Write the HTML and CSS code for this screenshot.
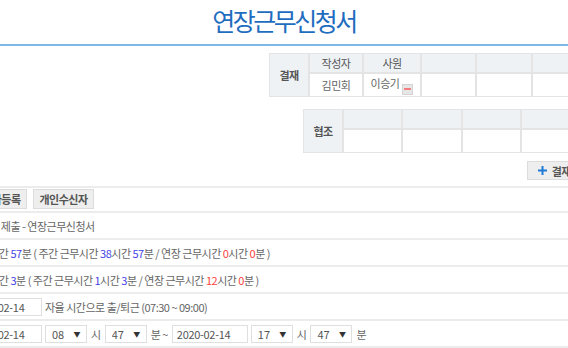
FILE: index.html
```html
<!DOCTYPE html>
<html>
<head>
  <meta charset="utf-8" />
  <title>연장근무신청서</title>
  <link rel="stylesheet" href="styles.css">
</head>
<body>
  <div class="page">
    <h1 class="doc-title">연장근무신청서</h1>

    <!-- approval lines -->
    <div class="approval">
      <table class="sign sign-main">
        <tr class="sign-head">
          <th class="sign-label" rowspan="2">결재</th>
          <td class="w54">작성자</td>
          <td class="w58">사원</td>
          <td class="w55"></td>
          <td class="w56"></td>
          <td class="w56"></td>
        </tr>
        <tr class="sign-body">
          <td>김민회</td>
          <td>이승기 <span class="remove" title="삭제"></span></td>
          <td></td>
          <td></td>
          <td></td>
        </tr>
      </table>

      <table class="sign sign-coop">
        <tr class="sign-head">
          <th class="sign-label" rowspan="2">협조</th>
          <td class="w59"></td>
          <td class="w60"></td>
          <td class="w59"></td>
          <td class="w67"></td>
        </tr>
        <tr class="sign-body">
          <td></td>
          <td></td>
          <td></td>
          <td></td>
        </tr>
      </table>

      <div class="sign-actions">
        <button class="btn btn-add">
          <svg width="9" height="9" viewBox="0 0 9 9"><path d="M4.5 0v9M0 4.5h9" stroke="#1f7bd6" stroke-width="2"/></svg>
          결재
        </button>
      </div>
    </div>

    <!-- form -->
    <div class="form">
      <div class="toolbar">
        <button class="btn">수신자등록</button>
        <button class="btn">개인수신자</button>
      </div>
      <table class="fields">
        <tr>
          <th>제목</th>
          <td>김민회 제출 - 연장근무신청서</td>
        </tr>
        <tr>
          <th>근무시간</th>
          <td class="sum"><b class="n">38</b>시간 <b class="n">57</b>분 ( 주간 근무시간 <b class="n">38</b>시간 <b class="n">57</b>분 / 연장 근무시간 <b class="r">0</b>시간 <b class="r">0</b>분 )</td>
        </tr>
        <tr>
          <th>신청시간</th>
          <td class="sum"><b class="n">13</b>시간 <b class="n">3</b>분 ( 주간 근무시간 <b class="n">1</b>시간 <b class="n">3</b>분 / 연장 근무시간 <b class="r">12</b>시간 <b class="r">0</b>분 )</td>
        </tr>
        <tr>
          <th>근무일</th>
          <td>
            <div class="inline">
              <input class="date" type="text" value="2020-02-14">
              <span>자율 시간으로 출/퇴근 (07:30 ~ 09:00)</span>
            </div>
          </td>
        </tr>
        <tr>
          <th>연장시간</th>
          <td>
            <div class="inline">
              <input class="date" type="text" value="2020-02-14">
              <span class="sel"><select><option>08</option></select></span>
              <span class="unit">시</span>
              <span class="sel"><select><option>47</option></select></span>
              <span class="unit">분 ~</span>
              <input class="date" type="text" value="2020-02-14">
              <span class="sel"><select><option>17</option></select></span>
              <span class="unit">시</span>
              <span class="sel"><select><option>47</option></select></span>
              <span class="unit">분</span>
            </div>
          </td>
        </tr>
        <tr>
          <th>비고</th>
          <td>· 연장근무 시간은 사전에 승인을 받은 후 근무하시기 바랍니다.</td>
        </tr>
      </table>
    </div>
  </div>
</body>
</html>
```

FILE: styles.css
```css
html, body {
  margin: 0;
  padding: 0;
  overflow: hidden;
}
body {
  font-family: "Noto Sans CJK KR", "Liberation Sans", sans-serif;
  font-size: 11px;
  letter-spacing: -0.5px;
  color: #666;
  background: #fff;
}
/* the page is wider than the window and scrolled */
.page {
  width: 820px;
  margin-left: -126px;
}
.doc-title {
  margin: 0;
  height: 40px;
  line-height: 40px;
  padding-bottom: 4px;
  border-bottom: 2px solid #7fb9e8;
  text-align: center;
  font-size: 25px;
  font-weight: normal;
  letter-spacing: -2.5px;
  color: #1f6dbf;
}

/* approval tables */
.approval {
  padding-right: 106px;
  display: flex;
  flex-direction: column;
  align-items: flex-end;
}
.sign {
  border-collapse: separate;
  border-spacing: 0;
  table-layout: fixed;
  margin-top: 7px;
}
.sign-coop {
  margin-top: 12px;
}
.sign th, .sign td {
  box-sizing: border-box;
  border: 1px solid #e4e4e4;
  padding: 0;
  text-align: center;
  font-weight: normal;
}
.sign .sign-label {
  width: 40px;
  background: #eef2f5;
  font-weight: bold;
  color: #555;
}
.sign-head td {
  height: 20px;
  background: #eef2f5;
  color: #555;
}
.sign-body td {
  height: 24px;
}
.w54 { width: 54px; }
.w55 { width: 55px; }
.w56 { width: 56px; }
.w58 { width: 58px; }
.w59 { width: 59px; }
.w60 { width: 60px; }
.w67 { width: 67px; }
.remove {
  display: inline-flex;
  align-items: center;
  justify-content: center;
  box-sizing: border-box;
  width: 11px;
  height: 11px;
  margin-left: 1px;
  vertical-align: -2px;
  background: #e6e6e6;
  border: 1px solid #d4d4d4;
}
.remove::after {
  content: "";
  width: 7px;
  height: 2px;
  background: #f27d7d;
}
.sign-actions {
  margin-top: 8px;
}
.btn {
  box-sizing: border-box;
  height: 20px;
  padding: 0 8px;
  border: 1px solid #dcdcdc;
  background: #eee;
  font-family: inherit;
  font-size: 11px;
  font-weight: bold;
  letter-spacing: -0.5px;
  color: #555;
}
.btn-add {
  height: 19px;
  display: inline-flex;
  align-items: center;
  gap: 5px;
  padding: 0 16px 0 10px;
}

/* form */
.form {
  margin-top: 6px;
}
.toolbar {
  display: flex;
  gap: 6px;
  padding: 1px 0 2px 92px;
  border-top: 2px solid #ececec;
  border-bottom: 2px solid #ececec;
}
.toolbar .btn {
  width: 61px;
  padding: 0;
}
.fields {
  width: 100%;
  border-collapse: collapse;
}
.fields th, .fields td {
  height: 25px;
  padding: 0;
  border-bottom: 2px solid #ececec;
  text-align: left;
  font-weight: normal;
}
.fields th {
  width: 92px;
}
.fields td {
  padding-left: 4px;
  white-space: nowrap;
}
.fields td.sum {
  padding-left: 12px;
}
.fields .inline {
  display: flex;
  align-items: center;
  gap: 3px;
  margin-left: -4px;
}
.fields .unit {
  padding: 0 1px;
}
.n {
  font-weight: normal;
  color: #4444e6;
}
.r {
  font-weight: normal;
  color: #ff4141;
}
input.date {
  box-sizing: border-box;
  width: 76px;
  height: 18px;
  padding: 0 4px;
  border: 1px solid #dfdfdf;
  font-family: inherit;
  font-size: 11px;
  letter-spacing: -0.3px;
  color: #555;
}
.sel {
  position: relative;
  display: inline-block;
}
.sel select {
  box-sizing: border-box;
  width: 42px;
  height: 18px;
  padding: 0 6px;
  border: 1px solid #dfdfdf;
  background: #fff;
  appearance: none;
  -webkit-appearance: none;
  font-family: inherit;
  font-size: 11px;
  color: #555;
}
.sel::after {
  content: "▼";
  position: absolute;
  right: 7px;
  top: 4px;
  font-size: 7px;
  color: #333;
}
```
